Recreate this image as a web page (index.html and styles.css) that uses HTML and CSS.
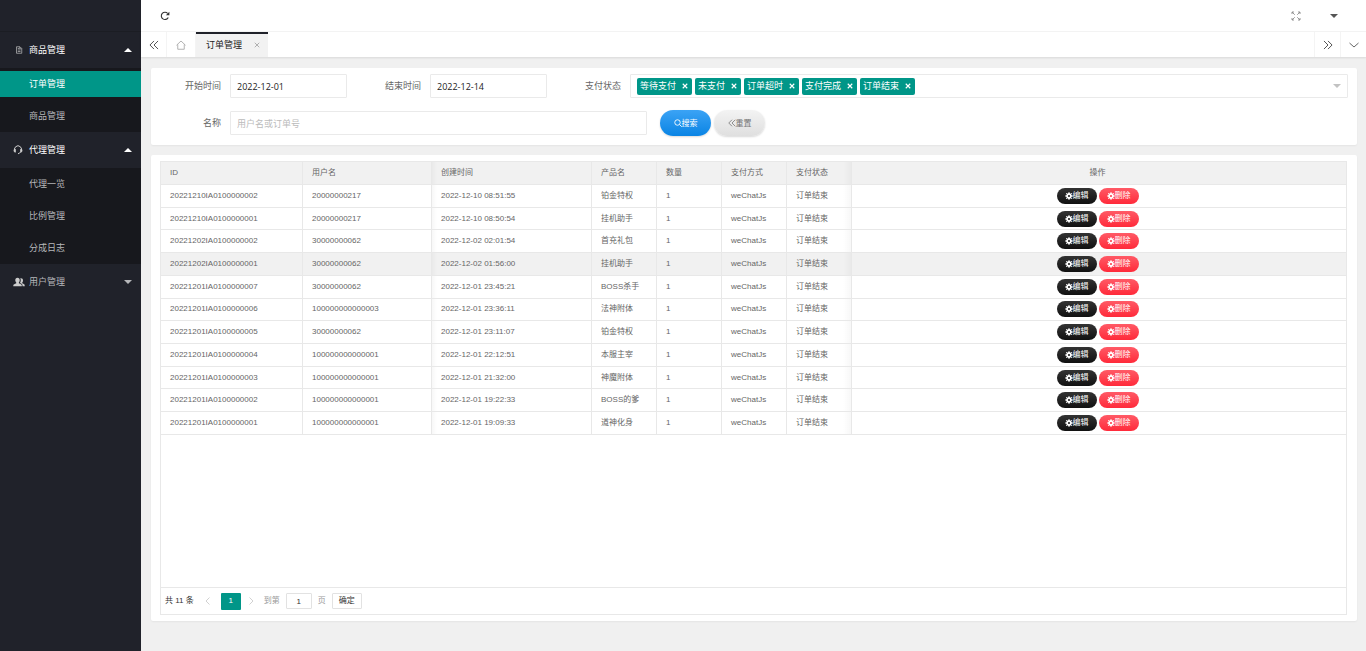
FILE: index.html
```html
<!DOCTYPE html>
<html lang="zh-CN">
<head>
<meta charset="utf-8">
<title>订单管理</title>
<link rel="stylesheet" href="styles.css">
</head>
<body>
<svg class="sprite" aria-hidden="true">
  <symbol id="gear" viewBox="0 0 16 16"><circle cx="8" cy="8" r="4" fill="none" stroke="currentColor" stroke-width="3.6"/><path d="M8 0v4M8 12v4M0 8h4M12 8h4M2.3 2.3l2.200 2.200M11.500 11.500l2.200 2.200M2.300 13.700l2.200-2.200M11.500 4.500l2.200-2.200" stroke="currentColor" stroke-width="1.800"/></symbol>
  <symbol id="dleft" viewBox="0 0 16 16"><path d="M8 1.500L1.500 8 8 14.500M14.500 1.500L8 8l6.500 6.500" fill="none" stroke="currentColor" stroke-width="1.600"/></symbol>
  <symbol id="dright" viewBox="0 0 16 16"><path d="M8 1.500L14.500 8 8 14.500M1.500 1.500L8 8l-6.500 6.500" fill="none" stroke="currentColor" stroke-width="1.600"/></symbol>
  <symbol id="cross" viewBox="0 0 16 16"><path d="M2 2l12 12M14 2L2 14" stroke="currentColor" fill="none"/></symbol>
  <symbol id="up" viewBox="0 0 16 8"><path d="M0 8L8 0l8 8z" fill="currentColor"/></symbol>
  <symbol id="down" viewBox="0 0 16 8"><path d="M0 0h16L8 8z" fill="currentColor"/></symbol>
</svg>
<div class="app">
  <nav class="side">
    <div class="logo"></div>
    <button class="group open"><svg class="gi" viewBox="0 0 16 16"><path d="M3 1.500h7l3.500 3.500v9.500H3zM5.500 5h3M5.500 8h5.500M5.500 11h5.500M9.500 2v3.500H13" fill="none" stroke="currentColor" stroke-width="1.300"/></svg><span>商品管理</span><svg class="caret"><use href="#up"/></svg></button>
    <div class="sub"><a class="on" href="#">订单管理</a><a href="#">商品管理</a></div>
    <button class="group open"><svg class="gi gi-lg" viewBox="0 0 20 20"><path d="M4.500 13A7 7 0 1 1 15.500 13M15 14q-1.500 3-5 3.500" fill="none" stroke="currentColor" stroke-width="2"/><path d="M2 8h3.500v7H3.500L1 12zM18 8h-3.500v7h2L19 12z" fill="currentColor"/></svg><span>代理管理</span><svg class="caret"><use href="#up"/></svg></button>
    <div class="sub"><a href="#">代理一览</a><a href="#">比例管理</a><a href="#">分成日志</a></div>
    <button class="group"><svg class="gi gi-xl" viewBox="0 0 24 20"><path d="M9 1.500c3 0 4.500 2 4.500 5 0 2-.8 3.500-1.800 4.500v1.500l5 2.500q1 .6 1 3.500H.5q0-3 1-3.500l5-2.500V11C5.300 10 4.500 8.500 4.500 6.500c0-3 1.500-5 4.500-5z" fill="currentColor"/><path d="M14.500 2.500c3.500-.8 5.500 1 5.500 4.500 0 2-.6 3-1.500 4v1.500l4 2q1 .8 1 4h-4.500c0-3-.6-4-2-4.800L14 12q1.500-3 1.500-5.500 0-2.500-1-4z" fill="currentColor"/></svg><span>用户管理</span><svg class="caret"><use href="#down"/></svg></button>
  </nav>
  <div class="main">
    <header class="top">
      <button class="ib" aria-label="刷新"><svg class="s10" viewBox="0 0 20 20"><path d="M16.500 13A7.300 7.300 0 1 1 15.500 5" fill="none" stroke="#333" stroke-width="2.200"/><path d="M18.800 1.500v7h-7z" fill="#333"/></svg></button>
      <span class="fill"></span>
      <button class="ib" aria-label="全屏"><svg class="s10" viewBox="0 0 20 20"><path d="M2 6V2h4M14 2h4v4M18 14v4h-4M6 18H2v-4M2.500 2.500l5 5M17.500 2.500l-5 5M17.500 17.500l-5-5M2.500 17.500l5-5" fill="none" stroke="#777" stroke-width="1.500"/></svg></button>
      <button class="ib" aria-label="菜单"><svg class="caret dark"><use href="#down"/></svg></button>
    </header>
    <div class="tabs">
      <button class="tb" aria-label="左移"><svg class="s10"><use href="#dleft"/></svg></button>
      <button class="tb home" aria-label="主页"><svg class="s10" viewBox="0 0 20 20"><path d="M1 10.500L10 2l9 8.500M3.500 9v9.500h13V9" fill="none" stroke="#999" stroke-width="1.500"/></svg></button>
      <div class="tab"><span>订单管理</span><button aria-label="关闭"><svg class="s6"><use href="#cross"/></svg></button></div>
      <span class="fill"></span>
      <button class="tb r" aria-label="右移"><svg class="s10"><use href="#dright"/></svg></button>
      <button class="tb r" aria-label="更多"><svg class="s10" viewBox="0 0 20 20"><path d="M1 6l9 8 9-8" fill="none" stroke="#555" stroke-width="1.800"/></svg></button>
    </div>
    <main class="body">
      <form class="card search">
        <div class="row">
          <label for="start">开始时间</label><input class="date" id="start" value="2022-12-01">
          <label for="end">结束时间</label><input class="date" id="end" value="2022-12-14">
          <label id="st">支付状态</label>
          <div class="multi" role="group" aria-labelledby="st">
            <button type="button" class="tag">等待支付<svg class="s6"><use href="#cross"/></svg></button>
            <button type="button" class="tag">未支付<svg class="s6"><use href="#cross"/></svg></button>
            <button type="button" class="tag">订单超时<svg class="s6"><use href="#cross"/></svg></button>
            <button type="button" class="tag">支付完成<svg class="s6"><use href="#cross"/></svg></button>
            <button type="button" class="tag">订单结束<svg class="s6"><use href="#cross"/></svg></button>
            <svg class="caret arrow"><use href="#down"/></svg>
          </div>
        </div>
        <div class="row">
          <label for="name">名称</label><input class="name" id="name" placeholder="用户名或订单号">
          <div class="btns">
            <button type="button" class="pill blue"><svg class="s8" viewBox="0 0 16 16"><circle cx="7" cy="7" r="5.500" fill="none" stroke="currentColor" stroke-width="1.800"/><path d="M11 11l4.500 4.500" stroke="currentColor" stroke-width="1.800"/></svg>搜索</button>
            <button type="reset" class="pill grey"><svg class="s8"><use href="#dleft"/></svg>重置</button>
          </div>
        </div>
      </form>
      <section class="card list">
        <div class="box">
          <div class="scroll">
          <table>
            <colgroup><col class="c1"><col class="c2"><col class="c3"><col class="c4"><col class="c4"><col class="c4"><col class="c4"><col></colgroup>
            <thead><tr><th>ID</th><th>用户名</th><th>创建时间</th><th>产品名</th><th>数量</th><th>支付方式</th><th>支付状态</th><th>操作</th></tr></thead>
            <tbody>
              <tr><td>20221210IA0100000002</td><td>20000000217</td><td>2022-12-10 08:51:55</td><td>铂金特权</td><td>1</td><td>weChatJs</td><td>订单结束</td><td><button class="act ed"><svg class="s8"><use href="#gear"/></svg>编辑</button><button class="act del"><svg class="s8"><use href="#gear"/></svg>删除</button></td></tr>
              <tr><td>20221210IA0100000001</td><td>20000000217</td><td>2022-12-10 08:50:54</td><td>挂机助手</td><td>1</td><td>weChatJs</td><td>订单结束</td><td><button class="act ed"><svg class="s8"><use href="#gear"/></svg>编辑</button><button class="act del"><svg class="s8"><use href="#gear"/></svg>删除</button></td></tr>
              <tr><td>20221202IA0100000002</td><td>30000000062</td><td>2022-12-02 02:01:54</td><td>首充礼包</td><td>1</td><td>weChatJs</td><td>订单结束</td><td><button class="act ed"><svg class="s8"><use href="#gear"/></svg>编辑</button><button class="act del"><svg class="s8"><use href="#gear"/></svg>删除</button></td></tr>
              <tr class="hover"><td>20221202IA0100000001</td><td>30000000062</td><td>2022-12-02 01:56:00</td><td>挂机助手</td><td>1</td><td>weChatJs</td><td>订单结束</td><td><button class="act ed"><svg class="s8"><use href="#gear"/></svg>编辑</button><button class="act del"><svg class="s8"><use href="#gear"/></svg>删除</button></td></tr>
              <tr><td>20221201IA0100000007</td><td>30000000062</td><td>2022-12-01 23:45:21</td><td>BOSS杀手</td><td>1</td><td>weChatJs</td><td>订单结束</td><td><button class="act ed"><svg class="s8"><use href="#gear"/></svg>编辑</button><button class="act del"><svg class="s8"><use href="#gear"/></svg>删除</button></td></tr>
              <tr><td>20221201IA0100000006</td><td>100000000000003</td><td>2022-12-01 23:36:11</td><td>法神附体</td><td>1</td><td>weChatJs</td><td>订单结束</td><td><button class="act ed"><svg class="s8"><use href="#gear"/></svg>编辑</button><button class="act del"><svg class="s8"><use href="#gear"/></svg>删除</button></td></tr>
              <tr><td>20221201IA0100000005</td><td>30000000062</td><td>2022-12-01 23:11:07</td><td>铂金特权</td><td>1</td><td>weChatJs</td><td>订单结束</td><td><button class="act ed"><svg class="s8"><use href="#gear"/></svg>编辑</button><button class="act del"><svg class="s8"><use href="#gear"/></svg>删除</button></td></tr>
              <tr><td>20221201IA0100000004</td><td>100000000000001</td><td>2022-12-01 22:12:51</td><td>本服主宰</td><td>1</td><td>weChatJs</td><td>订单结束</td><td><button class="act ed"><svg class="s8"><use href="#gear"/></svg>编辑</button><button class="act del"><svg class="s8"><use href="#gear"/></svg>删除</button></td></tr>
              <tr><td>20221201IA0100000003</td><td>100000000000001</td><td>2022-12-01 21:32:00</td><td>神魔附体</td><td>1</td><td>weChatJs</td><td>订单结束</td><td><button class="act ed"><svg class="s8"><use href="#gear"/></svg>编辑</button><button class="act del"><svg class="s8"><use href="#gear"/></svg>删除</button></td></tr>
              <tr><td>20221201IA0100000002</td><td>100000000000001</td><td>2022-12-01 19:22:33</td><td>BOSS的爹</td><td>1</td><td>weChatJs</td><td>订单结束</td><td><button class="act ed"><svg class="s8"><use href="#gear"/></svg>编辑</button><button class="act del"><svg class="s8"><use href="#gear"/></svg>删除</button></td></tr>
              <tr><td>20221201IA0100000001</td><td>100000000000001</td><td>2022-12-01 19:09:33</td><td>道神化身</td><td>1</td><td>weChatJs</td><td>订单结束</td><td><button class="act ed"><svg class="s8"><use href="#gear"/></svg>编辑</button><button class="act del"><svg class="s8"><use href="#gear"/></svg>删除</button></td></tr>
            </tbody>
          </table>
          </div>
          <div class="pager">
            <span>共 11 条</span>
            <button class="pg" aria-label="上一页"><svg class="s8" viewBox="0 0 16 16"><path d="M11 1L4 8l7 7" fill="none" stroke="currentColor" stroke-width="1.500"/></svg></button>
            <button class="pg cur">1</button>
            <button class="pg" aria-label="下一页"><svg class="s8" viewBox="0 0 16 16"><path d="M5 1l7 7-7 7" fill="none" stroke="currentColor" stroke-width="1.500"/></svg></button>
            <label class="jump">到第<input value="1">页</label>
            <button class="go">确定</button>
          </div>
        </div>
      </section>
    </main>
  </div>
</div>
</body>
</html>
```
FILE: styles.css
```css
* { box-sizing: border-box; }
body { margin: 0; font: 9px/14px "Open Sans", "Noto Sans CJK SC", sans-serif; color: #666; background: #f0f0f0; }
button, input { font: inherit; color: inherit; margin: 0; padding: 0; border: 0; background: none; }
button { display: flex; align-items: center; justify-content: center; cursor: pointer; }
a { text-decoration: none; color: inherit; }
svg { display: block; flex: none; }
.sprite { position: absolute; width: 0; height: 0; }
.s10 { width: 10px; height: 10px; }
.s8 { width: 8px; height: 8px; }
.s6 { width: 6px; height: 6px; }
.caret { width: 8px; height: 4px; }
.fill { flex: 1; }

.app { display: flex; min-height: 100vh; }
.side { width: 141px; flex: none; background: #20222a; color: #b6b7ba; }
.logo { height: 32px; border-bottom: 1px solid #1b1d23; }
.group { width: 100%; height: 36px; padding: 0 9px 0 13px; justify-content: flex-start; gap: 4px; }
.group span { flex: 1; text-align: left; }
.open { color: #fff; }
.gi { width: 8px; height: 8px; margin: 0 2px; color: #ccc; }
.gi-lg { width: 10px; height: 10px; margin: 0 2px 0 0; }
.gi-xl { width: 12px; height: 10px; margin: 0; }
.sub { display: flex; flex-direction: column; gap: 6px; padding: 3px 0; background: #17181d; }
.sub a { padding: 6px 29px; }
.sub .on { background: #009688; color: #fff; }

.main { flex: 1; min-width: 0; display: flex; flex-direction: column; }
.top { display: flex; height: 32px; padding: 0 22px 0 14px; gap: 8px; background: #fff; border-bottom: 1px solid #f4f4f4; }
.ib { width: 20px; }
.ib + .ib { margin-left: 10px; }
.dark { color: #555; }
.tabs { display: flex; height: 25px; background: #fff; box-shadow: 0 1px 2px rgba(0,0,0,.1); color: #555; }
.tb { width: 26px; border-right: 1px solid #f4f4f4; }
.home { width: 29px; }
.r { border-right: 0; border-left: 1px solid #f4f4f4; }
.tab { display: flex; align-items: center; gap: 12px; padding: 0 8px 0 10px; background: #f2f2f2; box-shadow: inset 0 2px #20222a; color: #222; }
.tab button { color: #999; }
.tab svg { stroke-width: 2; }

.body { flex: 1; display: flex; flex-direction: column; gap: 10px; padding: 11px 9px 30px 10px; }
.card { background: #fff; border-radius: 2px; box-shadow: 0 1px 2px rgba(0,0,0,.05); }
.search { display: flex; flex-direction: column; gap: 12px; padding: 6px 9px 9px 0; }
.row { display: flex; align-items: center; }
.row label { width: 70px; margin-right: 9px; text-align: right; }
.row input { height: 24px; border: 1px solid #eaeaea; border-radius: 1px; padding: 0 6px; color: #222; }
.date { width: 117px; margin-right: 4px; }
.name { width: 417px; margin-right: 13px; }
.row .name::placeholder { color: #bbb; opacity: 1; }
.multi { flex: 1; display: flex; align-items: center; gap: 3px; height: 24px; padding: 0 6px; border: 1px solid #eaeaea; border-radius: 1px; }
.tag { height: 17px; padding: 0 4px 0 3px; gap: 6px; border-radius: 2px; background: #009688; color: #fff; }
.tag svg { stroke-width: 3; }
.arrow { margin-left: auto; color: #c2c2c2; }
.btns { display: flex; gap: 3px; align-items: center; }
.pill { width: 51px; height: 26px; border-radius: 13px; font-size: 8px; box-shadow: 0 1px 2px rgba(0,0,0,.15); }
.blue { color: #fff; background: linear-gradient(#3ba3f5, #0a84e4); }
.grey { color: #777; background: linear-gradient(#f3f3f3, #dfdfdf); }

.list { flex: 1; display: flex; padding: 6px 10px 6px 9px; }
.box { flex: 1; display: flex; flex-direction: column; border: 1px solid #e8e8e8; font: 8px/12px "Liberation Sans", "Noto Sans CJK SC", sans-serif; }
.scroll { flex: 1; }
table { width: 100%; height: 273px; table-layout: fixed; border-collapse: separate; border-spacing: 0; }
.c1 { width: 142px; }
.c2 { width: 129px; }
.c3 { width: 160px; }
.c4 { width: 65px; }
th { height: 23px; }
td { height: 22px; }
th, td { padding: 0 9px; text-align: left; font-weight: 400; border-right: 1px solid #e8e8e8; border-bottom: 1px solid #e8e8e8; white-space: nowrap; }
th:last-child, td:last-child { padding-right: 12px; border-right: 0; text-align: center; }
thead tr, .hover { background: #f1f1f1; }
th:nth-child(3), td:nth-child(3) { background: linear-gradient(to right, rgba(0,0,0,.03), transparent 5px); }
th:nth-child(7), td:nth-child(7) { background: linear-gradient(to left, rgba(0,0,0,.03), transparent 8px); }
.act { display: inline-flex; vertical-align: middle; width: 40px; height: 16px; border-radius: 8px; color: #fff; }
.act + .act { margin-left: 2px; }
.ed { background: linear-gradient(#333, #111); }
.del { background: linear-gradient(#ff5a66, #ff2a3a); }
.pager { display: flex; align-items: center; height: 27px; padding: 0 4px; border-top: 1px solid #e8e8e8; color: #333; }
.pg { width: 20px; height: 17px; color: #c2c2c2; }
.pg:nth-of-type(1) { margin-left: 4px; }
.pager .cur { background: #009688; color: #fff; border-radius: 1px; margin-left: 3px; }
.jump { display: flex; align-items: center; gap: 6px; margin-left: 3px; color: #999; }
.jump input { width: 26px; height: 16px; text-align: center; border: 1px solid #e2e2e2; border-radius: 1px; color: #333; }
.go { width: 30px; height: 16px; margin-left: 6px; border: 1px solid #e2e2e2; border-radius: 1px; }
```
